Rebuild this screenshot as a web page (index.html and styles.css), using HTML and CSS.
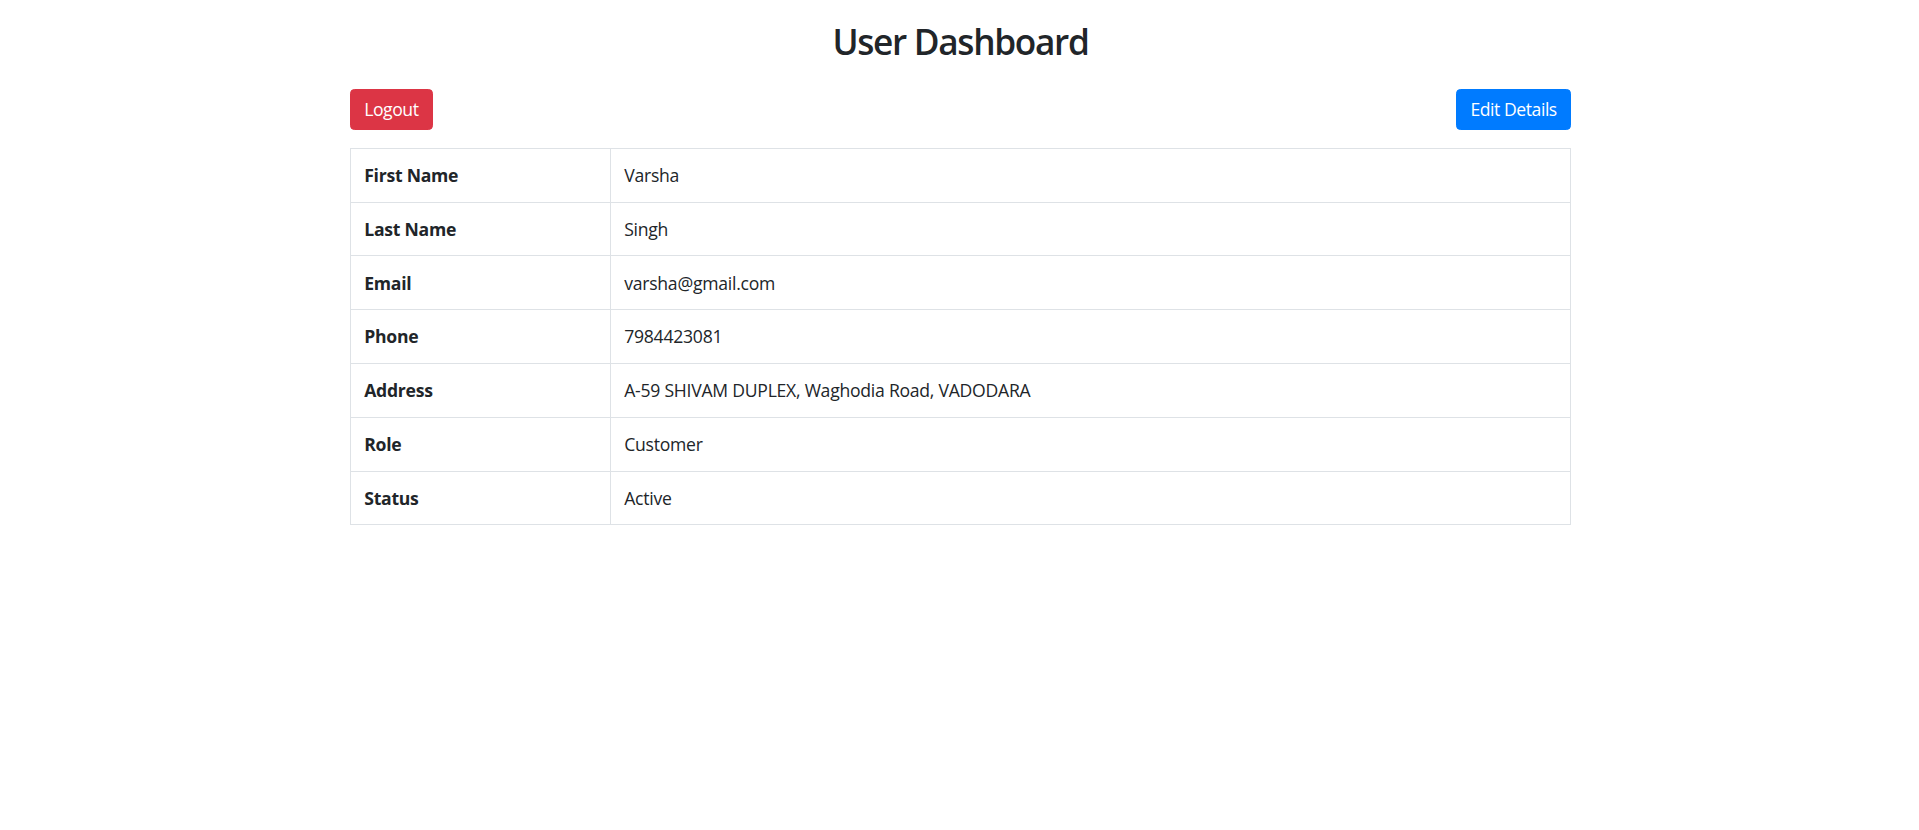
FILE: index.html
```html
<!DOCTYPE html>
<html lang="en">
<head>
<meta charset="utf-8">
<title>User Dashboard</title>
<link rel="stylesheet" href="styles.css">
</head>
<body>
<div class="container">
  <h2 class="title">User Dashboard</h2>
  <div class="actions">
    <button class="btn btn-danger">Logout</button>
    <button class="btn btn-primary">Edit Details</button>
  </div>
  <table class="details">
    <colgroup><col class="col-label"><col></colgroup>
    <tbody>
      <tr><th>First Name</th><td>Varsha</td></tr>
      <tr><th>Last Name</th><td>Singh</td></tr>
      <tr><th>Email</th><td>varsha@gmail.com</td></tr>
      <tr><th>Phone</th><td>7984423081</td></tr>
      <tr><th>Address</th><td>A-59 SHIVAM DUPLEX, Waghodia Road, VADODARA</td></tr>
      <tr><th>Role</th><td>Customer</td></tr>
      <tr><th>Status</th><td>Active</td></tr>
    </tbody>
  </table>
</div>
</body>
</html>
```
FILE: styles.css
```css
* { box-sizing: border-box; }
html, body { margin: 0; padding: 0; background: #fff; }
body {
  font-family: "Open Sans", "Noto Sans", sans-serif;
  font-size: 17.6px;
  line-height: 26.4px;
  color: #212529;
  letter-spacing: -0.25px;
}
.container {
  width: 1221px;
  margin-left: calc(50% - 609.5px);
  padding-top: 20px;
}
.title {
  margin: 0 0 26.5px;
  font-size: 35.2px;
  line-height: 42.2px;
  font-weight: 600;
  letter-spacing: -1.3px;
  text-align: center;
}
.actions {
  display: flex;
  justify-content: space-between;
  margin-top: 3px;
  margin-bottom: 17.6px;
}
.btn {
  font-family: inherit;
  font-size: 17.6px;
  line-height: 26.4px;
  letter-spacing: -0.45px;
  padding: 6.6px 13.2px;
  border: 1px solid transparent;
  border-radius: 4.4px;
  color: #fff;
  cursor: pointer;
}
.btn-danger { background: #dc3545; border-color: #dc3545; }
.btn-primary { background: #007bff; border-color: #007bff; }
.details {
  width: 100%;
  border-collapse: collapse;
}
.col-label { width: 260px; }
.details th, .details td {
  border: 1px solid #dee2e6;
  padding: 13.2px;
  text-align: left;
  vertical-align: top;
}
.details th { font-weight: 700; }
.details td { font-weight: 400; }
```
